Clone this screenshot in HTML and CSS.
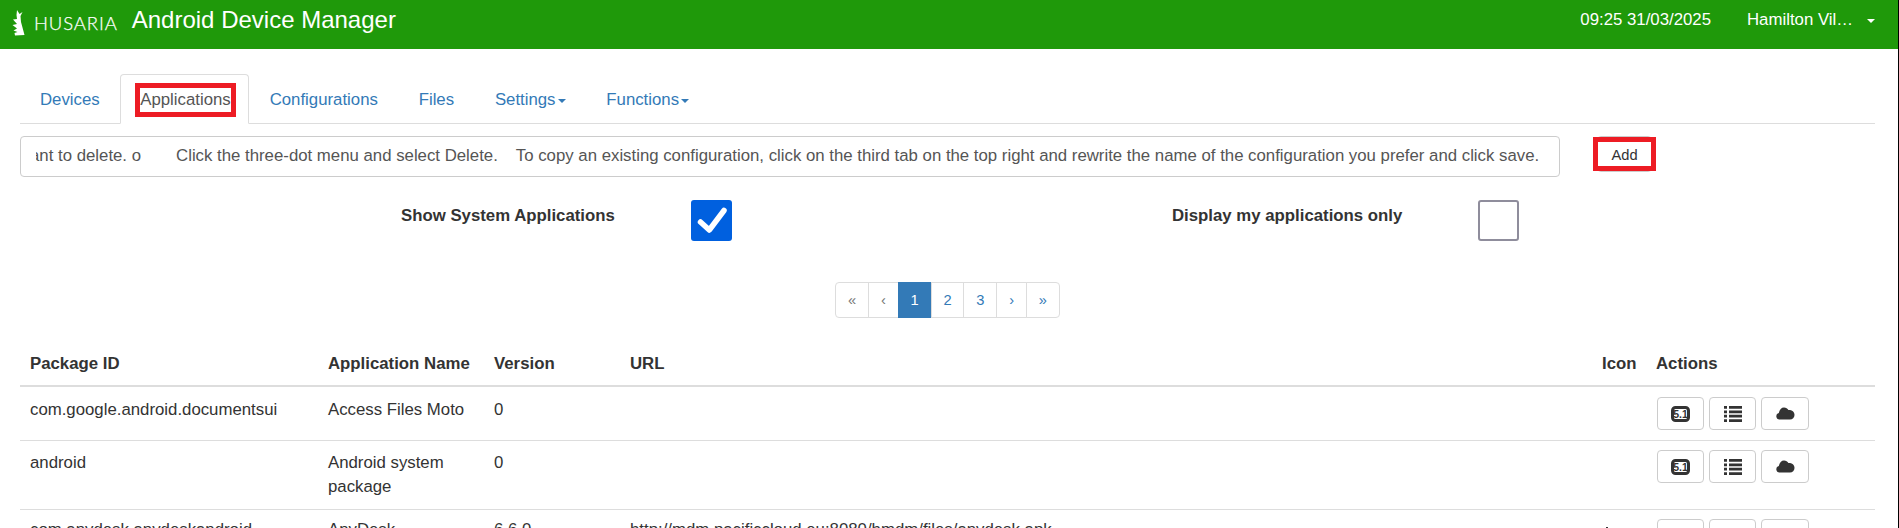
FILE: index.html
```html
<!DOCTYPE html>
<html lang="en">
<head>
<meta charset="utf-8">
<title>Android Device Manager</title>
<link rel="stylesheet" href="styles.css">
</head>
<body>
<header class="navbar">
  <div class="brand">
    <svg class="logo" width="14" height="26" viewBox="0 0 14 26"><path d="M5 0L7.500 4 10.500 2 8.500 6 9 12 12.500 25 3 25.500 2.500 23 5.500 22 1.500 20.500 5 18.500 0.500 15 5 14 1 9.500 5 9 4.500 5z" fill="#fff"/></svg>
    <span class="husaria">HUSARIA</span>
    <span class="title">Android Device Manager</span>
  </div>
  <div class="nav-right">
    <span class="clock">09:25 31/03/2025</span>
    <span class="user">Hamilton Vil…</span>
    <span class="caret caret-white"></span>
  </div>
</header>
<main class="content">
  <ul class="tabs">
    <li class="tab"><a>Devices</a></li>
    <li class="tab active"><a><span class="mark">Applications</span></a></li>
    <li class="tab"><a>Configurations</a></li>
    <li class="tab"><a>Files</a></li>
    <li class="tab"><a>Settings<span class="caret"></span></a></li>
    <li class="tab"><a>Functions<span class="caret"></span></a></li>
  </ul>
  <div class="info-row">
    <div class="marquee"><div class="track"><span class="m1">ant to delete. o</span><span class="m2">Click the three-dot menu and select Delete.</span><span class="m3">To copy an existing configuration, click on the third tab on the top right and rewrite the name of the configuration you prefer and click save.</span></div></div>
    <button class="add">Add</button>
  </div>
  <div class="filters">
    <div class="filter f1"><b>Show System Applications</b>
      <span class="check on"><svg width="41" height="41" viewBox="0 0 41 41"><path d="M9.500 22L18.300 30 33 10.500" fill="none" stroke="#fff" stroke-width="5.500" stroke-linecap="round" stroke-linejoin="round"/></svg></span>
    </div>
    <div class="filter f2"><b>Display my applications only</b><span class="check"></span></div>
  </div>
  <nav class="pager">
    <a class="pg off">«</a><a class="pg off">‹</a><a class="pg cur">1</a><a class="pg">2</a><a class="pg">3</a><a class="pg">›</a><a class="pg">»</a>
  </nav>
  <table class="grid">
    <colgroup><col class="c1"><col class="c2"><col class="c3"><col class="c4"><col class="c5"><col class="c6"></colgroup>
    <thead><tr><th>Package ID</th><th>Application Name</th><th>Version</th><th>URL</th><th>Icon</th><th>Actions</th></tr></thead>
    <tbody>
      <tr class="r1"><td>com.google.android.documentsui</td><td>Access Files Moto</td><td>0</td><td></td><td></td><td class="acts"><div class="btns">
        <button class="ib"><svg width="19" height="16" viewBox="0 0 19 16"><rect x="1.500" y="1.500" width="16" height="13" rx="3" fill="#fff" stroke="#333" stroke-width="3"/><text x="9.500" y="12" class="ver">5.1</text></svg></button>
        <button class="ib"><svg width="18" height="16" viewBox="0 0 18 16"><path d="M0 0h3v2.800H0zM5 0h13v2.800H5zM0 4.400h3v2.800H0zM5 4.400h13v2.800H5zM0 8.800h3v2.800H0zM5 8.800h13v2.800H5zM0 13.200h3V16H0zM5 13.200h13V16H5z" fill="#333"/></svg></button>
        <button class="ib ib3"><svg width="19" height="13" viewBox="0 0 19 13"><path d="M3.500 12.500a3.300 3.300 0 0 1-.7-6.500C3.500 2.500 5.500 0.500 8 0.500c2 0 3.600 1 4.400 2.600C16 3 18.500 5 18.500 8c0 2.700-2 4.500-4.500 4.500z" fill="#333"/></svg></button>
      </div></td></tr>
      <tr><td>android</td><td>Android system package</td><td>0</td><td></td><td></td><td class="acts"><div class="btns">
        <button class="ib"><svg width="19" height="16" viewBox="0 0 19 16"><rect x="1.500" y="1.500" width="16" height="13" rx="3" fill="#fff" stroke="#333" stroke-width="3"/><text x="9.500" y="12" class="ver">5.1</text></svg></button>
        <button class="ib"><svg width="18" height="16" viewBox="0 0 18 16"><path d="M0 0h3v2.800H0zM5 0h13v2.800H5zM0 4.400h3v2.800H0zM5 4.400h13v2.800H5zM0 8.800h3v2.800H0zM5 8.800h13v2.800H5zM0 13.200h3V16H0zM5 13.200h13V16H5z" fill="#333"/></svg></button>
        <button class="ib ib3"><svg width="19" height="13" viewBox="0 0 19 13"><path d="M3.500 12.500a3.300 3.300 0 0 1-.7-6.500C3.500 2.500 5.500 0.500 8 0.500c2 0 3.600 1 4.400 2.600C16 3 18.500 5 18.500 8c0 2.700-2 4.500-4.500 4.500z" fill="#333"/></svg></button>
      </div></td></tr>
      <tr class="r3"><td>com.anydesk.anydeskandroid</td><td>AnyDesk</td><td>6.6.0</td><td>http://mdm.pacificcloud.eu:8080/hmdm/files/anydesk.apk</td><td><i class="ic"></i></td><td class="acts"><div class="btns">
        <button class="ib"></button><button class="ib"></button><button class="ib ib3"></button>
      </div></td></tr>
    </tbody>
  </table>
</main>
</body>
</html>
```
FILE: styles.css
```css
* { box-sizing: border-box; }
html, body { margin: 0; height: 528px; overflow: hidden; background: #fff; }
body { font-family: "Liberation Sans", Arial, sans-serif; font-size: 16.8px; line-height: 24px; color: #333; border-right: 1px solid #000; }

.navbar { height: 49px; background: #1f990a; color: #fff; display: flex; justify-content: space-between; padding: 0 23px 0 12px; }
.brand { display: flex; align-items: flex-start; }
.logo { margin-top: 10px; }
.husaria { font-family: "Lato", "Liberation Sans", sans-serif; font-weight: 300; font-size: 18.500px; line-height: 26px; margin: 10px 0 0 8px; letter-spacing: .9px; -webkit-text-stroke: .25px #fff; }
.title { font-size: 24px; line-height: 28px; margin: 6px 0 0 14px; }
.nav-right { display: flex; align-items: flex-start; padding-top: 8px; }
.user { margin-left: 36px; width: 120px; }
.caret { display: inline-block; width: 0; height: 0; margin-left: 2px; vertical-align: middle; border-top: 4px solid #337ab7; border-right: 4px solid transparent; border-left: 4px solid transparent; }
.caret-white { border-top-color: #fff; margin: 11px 0 0 0; }

.content { padding: 25px 23px 0 20px; }
.tabs { list-style: none; display: flex; margin: 0; padding: 0; height: 50px; border-bottom: 1px solid #ddd; }
.tab a { display: block; height: 50px; padding: 13px 19.400px; color: #337ab7; border: 1px solid transparent; border-radius: 4px 4px 0 0; }
.tab:first-child a { padding-left: 19px; padding-right: 19.200px; }
.tab.active a { color: #555; background: #fff; border-color: #ddd; border-bottom-color: #fff; padding-left: 19.400px; padding-right: 17.500px; }
.mark { outline: 5px solid #ed1c24; display: inline-block; }

.info-row { display: flex; align-items: flex-start; margin-top: 12px; }
.marquee { width: 1540px; height: 41px; border: 1px solid #ccc; border-radius: 4px; padding: 7px 15px; color: #555; }
.track { display: flex; overflow: hidden; white-space: nowrap; height: 24px; }
.m1 { margin-left: -6px; }
.m2 { margin-left: 35px; }
.m3 { margin-left: 18px; }
.add { position: relative; margin-left: 37px; width: 55px; height: 36px; background: #fff; border: 1px solid #ccc; border-radius: 4px; font: 14.700px/20px "Liberation Sans", Arial, sans-serif; color: #333; padding: 1px 0 0; }
.add::after { content: ""; position: absolute; inset: 0 -5px; border: 5px solid #ed1c24; }

.filters { display: flex; height: 41px; margin-top: 23px; }
.filter { display: flex; align-items: flex-start; }
.filter b { line-height: 24px; padding-top: 4px; }
.f1 { width: 1152px; padding-left: 381px; }
.f1 b { width: 290px; }
.f2 b { width: 306px; }
.check { width: 41px; height: 41px; border: 2px solid #8f8d9c; border-radius: 3px; background: #fff; display: block; }
.check.on { background: #0060df; border: 0; }
.check svg { display: block; }

.pager { display: flex; justify-content: center; margin-top: 41px; height: 36px; }
.pg { display: block; height: 36px; padding: 0 11.850px; border: 1px solid #ddd; margin-left: -1px; color: #337ab7; font-size: 14.700px; line-height: 34px; background: #fff; }
.pg:first-child { border-radius: 4px 0 0 4px; margin-left: 0; }
.pg:last-child { border-radius: 0 4px 4px 0; }
.pg.off { color: #777; }
.pg.cur { background: #337ab7; border-color: #337ab7; color: #fff; }

.grid { width: 1855px; border-collapse: separate; border-spacing: 0; table-layout: fixed; margin-top: 23px; }
.c1 { width: 298px; } .c2 { width: 166px; } .c3 { width: 136px; } .c4 { width: 972px; } .c5 { width: 54px; } .c6 { width: 229px; }
.grid th { text-align: left; padding: 11px 10px 9px; font-weight: 700; border-bottom: 2px solid #ddd; height: 46px; line-height: 24px; }
.grid td { padding: 10px; vertical-align: top; border-bottom: 1px solid #ddd; height: 54px; line-height: 24px; }
.grid .r1 td { padding-top: 11px; }
.grid .r3 td { padding-top: 8px; }
.grid td.acts { padding: 9px 0 0 11px; }
.grid .r1 td.acts { padding-top: 10px; }
.btns { display: flex; gap: 5px; }
.ib { width: 47px; height: 33px; background: #fff; border: 1px solid #ccc; border-radius: 4px; padding: 0; display: flex; align-items: center; justify-content: center; }
.ib3 { width: 48px; }
.ic { display: block; width: 2px; height: 4px; background: #333; margin: 9px 0 0 4px; }
.ver { font: 700 10.500px "Liberation Sans", sans-serif; fill: #333; text-anchor: middle; }
```
